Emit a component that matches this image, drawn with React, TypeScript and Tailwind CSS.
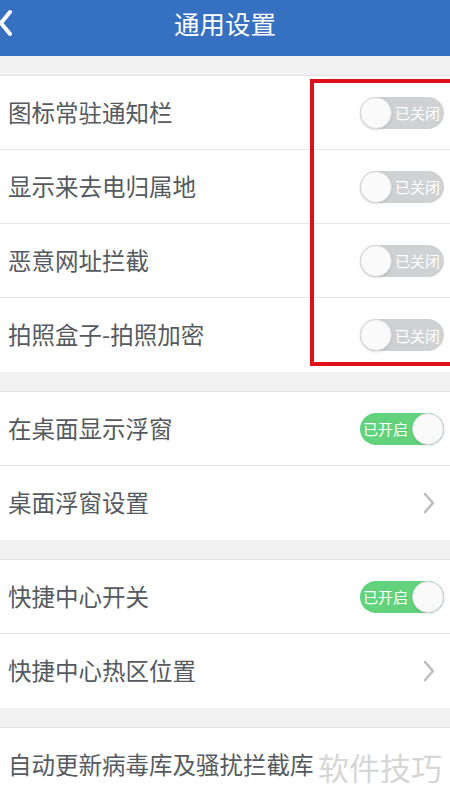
import React from 'react';

const font = { fontFamily: '"Noto Sans CJK SC", "Noto Sans", sans-serif' };

function Toggle({ on }: { on: boolean }) {
  if (on) {
    return (
      <div className="relative flex h-[32px] w-[84px] items-center rounded-full bg-[#62d37c]">
        <span className="pl-[3px] text-[15px] leading-none text-white">已开启</span>
        <div className="absolute right-0 top-0 h-[32px] w-[32px] rounded-full border border-[#d8d8d8] bg-[#fafafa] shadow" />
      </div>
    );
  }
  return (
    <div className="relative flex h-[32px] w-[84px] items-center justify-end rounded-full bg-[#cfd1d3]">
      <span className="pr-[4px] text-[15px] leading-none text-white">已关闭</span>
      <div className="absolute left-0 top-0 h-[32px] w-[32px] rounded-full border border-[#d8d8d8] bg-[#fafafa] shadow" />
    </div>
  );
}

function Chevron() {
  return (
    <svg width="14" height="24" viewBox="0 0 14 24" className="mr-[8px]">
      <path d="M3 3 L11 12 L3 21" fill="none" stroke="#bdbdbd" strokeWidth="2.5" strokeLinecap="round" strokeLinejoin="round" />
    </svg>
  );
}

function Row({ label, right, last }: { label: string; right?: React.ReactNode; last?: boolean }) {
  return (
    <div className={`flex h-[74px] items-center justify-between bg-white pl-[8px] pr-[6px] ${last ? '' : 'border-b border-[#e6e6e6]'}`}>
      <span className="text-[23.5px] text-[#555a60]">{label}</span>
      {right}
    </div>
  );
}

function Gap() {
  return <div className="h-[20px] border-b border-[#e2e2e2] bg-[#f1f1f1]" />;
}

export default function App() {
  return (
    <div className="relative h-[802px] w-[450px] overflow-hidden bg-[#f1f1f1]" style={font}>
      {/* Header */}
      <div className="relative flex h-[56px] justify-center bg-[#3670c0] pt-[4px]">
        <svg width="16" height="28" viewBox="0 0 16 28" className="absolute left-[-2px] top-[9px]">
          <path d="M12 3 L3 14 L12 25" fill="none" stroke="#fff" strokeWidth="4" strokeLinecap="round" strokeLinejoin="round" />
        </svg>
        <span className="text-[25.5px] leading-[38px] text-white">通用设置</span>
      </div>

      <Gap />
      <Row label="图标常驻通知栏" right={<Toggle on={false} />} />
      <Row label="显示来去电归属地" right={<Toggle on={false} />} />
      <Row label="恶意网址拦截" right={<Toggle on={false} />} />
      <Row label="拍照盒子-拍照加密" right={<Toggle on={false} />} last />

      <Gap />
      <Row label="在桌面显示浮窗" right={<Toggle on />} />
      <Row label="桌面浮窗设置" right={<Chevron />} last />

      <Gap />
      <Row label="快捷中心开关" right={<Toggle on />} />
      <Row label="快捷中心热区位置" right={<Chevron />} last />

      <Gap />
      <Row label="自动更新病毒库及骚扰拦截库" last />

      {/* red highlight box */}
      <div className="absolute left-[310px] top-[79px] h-[287px] w-[150px] border-[4px] border-[#e0101a]" />

      {/* watermark */}
      <span className="absolute left-[318px] top-[744px] text-[31px] text-[#d6d6d6]">软件技巧</span>
    </div>
  );
}
